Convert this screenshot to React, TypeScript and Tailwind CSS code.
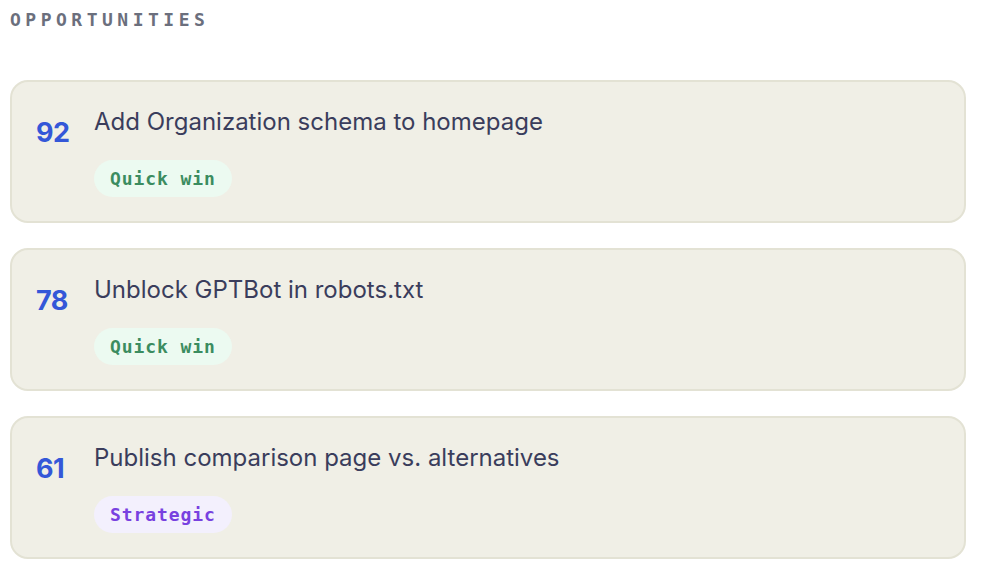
const items = [
  { score: 92, title: "Add Organization schema to homepage", tag: "Quick win", kind: "quick" },
  { score: 78, title: "Unblock GPTBot in robots.txt", tag: "Quick win", kind: "quick" },
  { score: 61, title: "Publish comparison page vs. alternatives", tag: "Strategic", kind: "strategic" },
];

const mono = "font-['DejaVu_Sans_Mono','Liberation_Mono',monospace]";

function Tag({ label, kind }: { label: string; kind: string }) {
  const tone =
    kind === "quick"
      ? "bg-[#ecfaf1] text-[#3b8c60]"
      : "bg-[#f3f0fd] text-[#7841e0]";
  return (
    <span
      className={`inline-flex h-[37px] items-center rounded-full px-4 text-[18px] font-bold tracking-[0.05em] ${mono} ${tone}`}
    >
      {label}
    </span>
  );
}

export default function App() {
  return (
    <div className="min-h-screen bg-white px-[10px] pt-[10px] font-['Inter','Liberation_Sans',sans-serif]">
      <h2
        className={`text-[18px] font-bold uppercase leading-5 tracking-[0.25em] text-[#6b6f7d] ${mono}`}
      >
        Opportunities
      </h2>

      <div className="mt-[50px] flex w-[956px] flex-col gap-[25px]">
        {items.map((item) => (
          <div
            key={item.score}
            className="flex gap-6 rounded-[18px] border-2 border-[#e3e2d4] bg-[#f0efe6] p-6"
          >
            <div className="mt-[11px] w-[34px] text-[27px] font-bold leading-[32px] tracking-[-0.02em] text-[#3457d8]">
              {item.score}
            </div>
            <div className="flex flex-col items-start gap-[22px]">
              <div className="text-[24px] leading-[32px] text-[#3a3d5c]">
                {item.title}
              </div>
              <Tag label={item.tag} kind={item.kind} />
            </div>
          </div>
        ))}
      </div>
    </div>
  );
}
